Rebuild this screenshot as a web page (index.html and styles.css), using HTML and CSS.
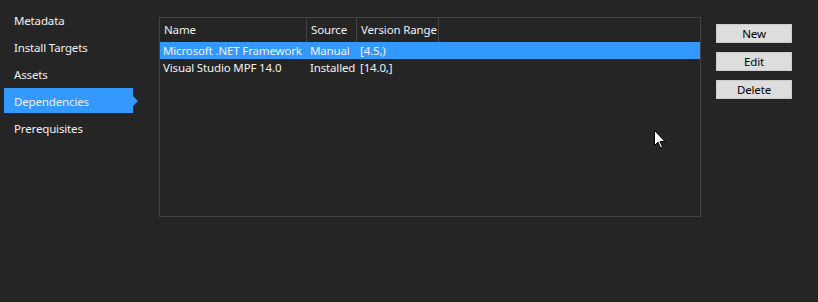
FILE: index.html
```html
<!DOCTYPE html>
<html lang="en">
<head>
    <meta charset="UTF-8">
    <title>Dependencies</title>
    <link rel="stylesheet" href="styles.css">
</head>
<body>
    <div class="page">
        <ul class="nav">
            <li>Metadata</li>
            <li>Install Targets</li>
            <li>Assets</li>
            <li class="active">Dependencies</li>
            <li>Prerequisites</li>
        </ul>
        <div class="list">
            <div class="row head">
                <div class="cell">Name</div>
                <div class="cell">Source</div>
                <div class="cell">Version Range</div>
                <div class="cell"></div>
            </div>
            <div class="row selected">
                <div class="cell">Microsoft .NET Framework</div>
                <div class="cell">Manual</div>
                <div class="cell">[4.5,)</div>
                <div class="cell"></div>
            </div>
            <div class="row">
                <div class="cell">Visual Studio MPF 14.0</div>
                <div class="cell">Installed</div>
                <div class="cell">[14.0,]</div>
                <div class="cell"></div>
            </div>
        </div>
        <div class="buttons">
            <button>New</button>
            <button>Edit</button>
            <button>Delete</button>
        </div>
    </div>
    <svg class="cursor" width="13" height="20" viewBox="0 0 13 20">
        <path d="M0.5 0.5 L0.5 15.5 L4 12 L6.5 18 L8.5 17 L6 11.5 L11 11.5 Z" fill="#fff" stroke="#000" stroke-width="1"/>
    </svg>
</body>
</html>
```

FILE: styles.css
```css
* {
    box-sizing: border-box;
    margin: 0;
    padding: 0;
}
body {
    background: #252526;
    color: #f1f1f1;
    font-family: "Noto Sans", "Liberation Sans", sans-serif;
    font-size: 11.5px;
    letter-spacing: -0.15px;
    width: 818px;
    height: 302px;
    overflow: hidden;
    position: relative;
}
.page {
    display: flex;
    align-items: flex-start;
    padding-top: 7px;
}
.nav {
    list-style: none;
    display: flex;
    flex-direction: column;
    gap: 2px;
    margin-left: 4px;
    width: 129px;
}
.nav li {
    height: 25px;
    line-height: 25px;
    padding: 1px 0 0 10px;
    position: relative;
}
.nav li.active {
    background: #3399ff;
}
.nav li.active::after {
    content: "";
    position: absolute;
    right: -5px;
    top: 8px;
    border-top: 5px solid transparent;
    border-bottom: 5px solid transparent;
    border-left: 5px solid #3399ff;
}
.list {
    margin-left: 26px;
    margin-top: 10px;
    width: 542px;
    height: 200px;
    border: 1px solid #434346;
}
.row {
    display: grid;
    grid-template-columns: 147px 50px 82px 1fr;
    height: 17px;
    line-height: 18px;
}
.row .cell {
    padding-left: 3px;
    white-space: nowrap;
    overflow: hidden;
}
.row.head {
    height: 24px;
    line-height: 24px;
}
.row.head .cell {
    border-right: 1px solid #434346;
    padding-left: 4px;
}
.row.head .cell:last-child {
    border-right: none;
}
.row.selected {
    background: #3399ff;
}
.buttons {
    display: flex;
    flex-direction: column;
    gap: 9px;
    margin-left: 15px;
    margin-top: 17px;
}
.buttons button {
    width: 76px;
    height: 19px;
    background: #dddddd;
    border: 1px solid #cccccc;
    color: #000;
    font-family: inherit;
    font-size: 11.5px;
    letter-spacing: -0.15px;
    line-height: 16px;
}
.cursor {
    position: absolute;
    left: 654px;
    top: 130px;
}
```
